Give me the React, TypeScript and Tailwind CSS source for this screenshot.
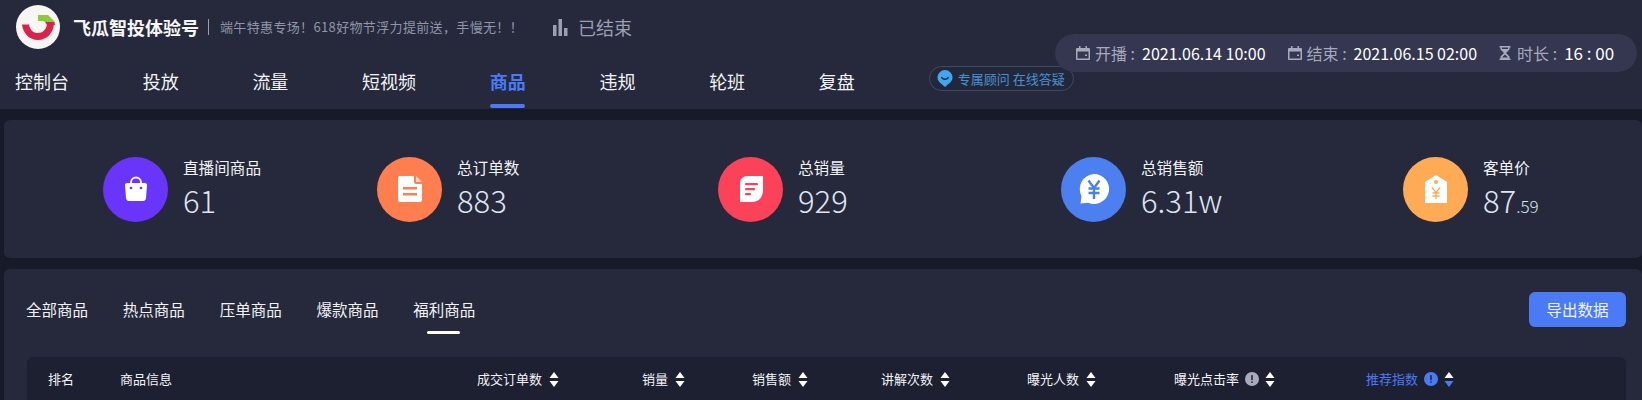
import { ReactNode } from "react";

const navItems = ["控制台", "投放", "流量", "短视频", "商品", "违规", "轮班", "复盘"];
const tabs = ["全部商品", "热点商品", "压单商品", "爆款商品", "福利商品"];

function Logo() {
  return (
    <svg viewBox="0 0 44 44" className="h-11 w-11 shrink-0">
      <circle cx="22" cy="22" r="22" fill="#f7f6f3" />
      <path d="M6 19.500h7c1 6 4.500 8.500 9 8.500s8-3 9-8.500h7c-1 9-7.500 15.500-16 15.500S7 28.500 6 19.500Z" fill="#d9234a" />
      <path d="M22 10h10l7 7h-10l-2-1h-5Z" fill="#8fc73e" />
      <path d="M29 17h9.500l.5 3h-8Z" fill="#d9234a" />
    </svg>
  );
}

function CalendarIcon() {
  return (
    <svg viewBox="0 0 14 14" className="h-[14px] w-[14px] shrink-0" fill="#a7a9bd">
      <path d="M3 0h1.500v2h5V0H11v2h2a1 1 0 0 1 1 1v10a1 1 0 0 1-1 1H1a1 1 0 0 1-1-1V3a1 1 0 0 1 1-1h2Zm-1.500 5.500v7h11v-7Z" />
      <rect x="9" y="8.500" width="2" height="1.500" />
    </svg>
  );
}

function HourglassIcon() {
  return (
    <svg viewBox="0 0 14 14" className="h-[14px] w-[14px] shrink-0" fill="#a7a9bd">
      <path d="M1.500 0h11v1.500h-1v2L8 7l3.500 3.500v2h1V14h-11v-1.500h1v-2L6 7 2.500 3.500v-2h-1Zm2.500 1.500v1.500h6V1.500ZM7 8.500 4 11.500h6Z" />
    </svg>
  );
}

function SortIcon({ active }: { active?: boolean }) {
  return (
    <svg viewBox="0 0 10 15" className="h-[15px] w-[10px] shrink-0">
      <path d="M5 0l4.500 6h-9Z" fill="#ffffff" />
      <path d="M5 15L.5 9h9Z" fill={active ? "#4a7af5" : "#ffffff"} />
    </svg>
  );
}

function InfoIcon({ color }: { color: string }) {
  return (
    <svg viewBox="0 0 14 14" className="h-[14px] w-[14px] shrink-0">
      <circle cx="7" cy="7" r="7" fill={color} />
      <rect x="6.200" y="3" width="1.600" height="5.200" rx=".6" fill="#23263a" />
      <rect x="6.200" y="9.300" width="1.600" height="1.600" rx=".6" fill="#23263a" />
    </svg>
  );
}

function BagIcon() {
  return (
    <svg viewBox="0 0 24 26" className="h-[26px] w-[24px]">
      <path d="M7 8V6.500a5 5 0 0 1 10 0V8" fill="none" stroke="#fff" strokeWidth="1.800" />
      <path d="M3 7h18c1.500 0 2 1 2 2l-1 13c0 2-1.500 3-3 3H5c-1.500 0-3-1-3-3L1 9c0-1 .5-2 2-2Z" fill="#fff" />
      <circle cx="7" cy="12" r="1.300" fill="#6a35fb" />
      <circle cx="17" cy="12" r="1.300" fill="#6a35fb" />
    </svg>
  );
}

function DocIcon() {
  return (
    <svg viewBox="0 0 24 26" className="h-[26px] w-[24px]">
      <path d="M2 0h14v6a2 2 0 0 0 2 2h6v16a2 2 0 0 1-2 2H2a2 2 0 0 1-2-2V2a2 2 0 0 1 2-2Z" fill="#fff" />
      <path d="M18 0l6 6h-6Z" fill="#ffd9c7" />
      <rect x="5" y="11" width="14" height="2.500" fill="#ff7e4f" />
      <rect x="5" y="17" width="14" height="2.500" fill="#ff7e4f" />
    </svg>
  );
}

function NoteIcon() {
  return (
    <svg viewBox="0 0 24 26" className="h-[26px] w-[24px]">
      <path d="M8 0h16v14c0 7-4 12-11 12H1V8c0-5 3-8 7-8Z" fill="#fff" />
      <rect x="6" y="7" width="13" height="2.200" rx="1" fill="#fb4259" />
      <rect x="6" y="12" width="10" height="2.200" rx="1" fill="#fb4259" />
      <rect x="6" y="17" width="6" height="2.200" rx="1" fill="#fb4259" />
    </svg>
  );
}

function YenBubbleIcon() {
  return (
    <svg viewBox="0 0 30 30" className="h-[30px] w-[30px]">
      <path d="M15 0a15 15 0 1 1-6 28.700L1.500 29.500l1-7.500A15 15 0 0 1 15 0Z" fill="#fff" />
      <path d="M9.500 6.500 15 14l5.500-7.500M15 14v11M9.500 14.500h11M9.500 19h11" fill="none" stroke="#4c7ff0" strokeWidth="2.400" />
    </svg>
  );
}

function TagIcon() {
  return (
    <svg viewBox="0 0 22 28" className="h-[28px] w-[22px]">
      <path d="M11 0l11 7v21H0V7Z" fill="#fff" />
      <circle cx="11" cy="7" r="2" fill="#ffaa55" />
      <path d="M7 12.500l4 5 4-5M11 17.500V24M7.500 18h7M7.500 21h7" fill="none" stroke="#ffaa55" strokeWidth="1.300" />
    </svg>
  );
}

function Stat({
  color,
  icon,
  label,
  value,
  suffix,
}: {
  color: string;
  icon: ReactNode;
  label: string;
  value: string;
  suffix?: string;
}) {
  return (
    <div className="flex items-center gap-[15px]">
      <div className={`flex h-[65px] w-[65px] items-center justify-center rounded-full ${color}`}>{icon}</div>
      <div className="pb-[3px]">
        <p className="text-[15.6px] leading-[22px] text-[#f2f3f7]">{label}</p>
        <p className="mt-[2px] h-[40px] text-[31px] leading-[40px] font-light text-[#dfe4f0]">
          {value}
          {suffix && <span className="text-[17px] leading-none">{suffix}</span>}
        </p>
      </div>
    </div>
  );
}

export default function App() {
  return (
    <div className="relative h-[400px] overflow-hidden bg-[#171a28] font-['Noto_Sans_CJK_SC','Microsoft_YaHei',sans-serif] text-white">
      <header className="h-[109px] bg-[#25293b]">
        <div className="flex h-[54px] items-center pl-4">
          <Logo />
          <span className="ml-[13px] text-[18px] font-bold text-[#f5f6f8]">飞瓜智投体验号</span>
          <span className="ml-[9px] h-[16px] w-px bg-[#9a9fb2]" />
          <span className="ml-[11px] text-[13px] tracking-[0.35px] text-[#9095a8]">端午特惠专场！618好物节浮力提前送，手慢无！！</span>
          <svg viewBox="0 0 15 17" className="ml-[30px] h-[17px] w-[15px]" fill="#9a9fb2">
            <rect x="0" y="6" width="3.500" height="11" />
            <rect x="5.500" y="0" width="3.500" height="17" />
            <rect x="11" y="9" width="3.500" height="8" />
          </svg>
          <span className="ml-[10px] text-[18px] text-[#9a9fb2]">已结束</span>
        </div>
        <nav className="flex h-[55px] items-center pl-[15px]">
          <div className="flex gap-[73.700px]">
            {navItems.map((item) =>
              item === "商品" ? (
                <span key={item} className="relative text-[18px] leading-[55px] font-bold text-[#4a7af5]">
                  {item}
                  <span className="absolute right-[1px] bottom-[1px] left-0 h-1 rounded-sm bg-[#4a7af5]" />
                </span>
              ) : (
                <span key={item} className="text-[18px] leading-[55px] text-[#f2f3f7]">
                  {item}
                </span>
              ),
            )}
          </div>
          <div className="mb-[6px] ml-[74px] flex h-[25px] w-[145px] items-center gap-[5px] rounded-full border border-[#3c4a63] bg-[#22283a] pl-[7px]">
            <svg viewBox="0 0 16 17" className="h-[17px] w-[16px]">
              <path d="M8 0a7.500 7.500 0 0 1 7.500 7.500c0 4-3.500 6-7.500 9.500-4-3.500-7.500-5.500-7.500-9.500A7.500 7.500 0 0 1 8 0Z" fill="#42a5ee" />
              <path d="M4.500 7c1 3 6 3 7 0" fill="none" stroke="#173457" strokeWidth="1.300" />
            </svg>
            <span className="text-[13px] whitespace-nowrap text-[#4a90d0]">专属顾问 在线答疑</span>
          </div>
        </nav>
      </header>

      <div className="absolute top-[34px] left-[1055px] flex h-[38px] w-[582px] items-center rounded-full bg-[#34374f] pl-[21px] text-[16px] text-[#a7a9bd]">
        <CalendarIcon />
        <span className="ml-[5px]">开播 :</span>
        <span className="ml-[7px] text-white">2021.06.14 10:00</span>
        <span className="ml-[22px]">
          <CalendarIcon />
        </span>
        <span className="ml-[5px]">结束 :</span>
        <span className="ml-[7px] text-white">2021.06.15 02:00</span>
        <span className="ml-[21px]">
          <HourglassIcon />
        </span>
        <span className="ml-[5px]">时长 :</span>
        <span className="ml-[7px] text-[17px] text-white">16 : 00</span>
      </div>

      <section className="mt-[11px] ml-1 grid h-[138px] grid-cols-[274px_341px_343px_342px_1fr] items-center rounded-md bg-[#25293b] pl-[99px]">
        <Stat color="bg-[#6a35fb]" icon={<BagIcon />} label="直播间商品" value="61" />
        <Stat color="bg-[#ff7e4f]" icon={<DocIcon />} label="总订单数" value="883" />
        <Stat color="bg-[#fb4259]" icon={<NoteIcon />} label="总销量" value="929" />
        <Stat color="bg-[#4c7ff0]" icon={<YenBubbleIcon />} label="总销售额" value="6.31w" />
        <Stat color="bg-[#ffaa55]" icon={<TagIcon />} label="客单价" value="87" suffix=".59" />
      </section>

      <section className="mt-[11px] ml-1 h-[140px] rounded-t-md bg-[#25293b] pt-[22px] pr-4 pl-[23px]">
        <div className="flex h-[66px] items-start justify-between">
          <div className="-ml-[1px] flex gap-[34.800px] text-[15.500px] leading-[36px] text-[#f2f3f7]">
            {tabs.map((tab) => (
              <span key={tab} className="relative">
                {tab}
                {tab === "福利商品" && (
                  <span className="absolute top-[40px] left-[14px] h-[3px] w-[33px] rounded-full bg-white" />
                )}
              </span>
            ))}
          </div>
          <button className="mt-[1px] h-[35px] w-[97px] rounded-md bg-[#4a7af5] text-[15.600px] text-[#f2f3f7]">导出数据</button>
        </div>
        <div className="grid h-[44px] grid-cols-[72px_357px_165px_110px_129px_146px_147px_192px_1fr] items-center rounded-t-md bg-[#1d2031] pl-[21px] text-[13px] text-[#f2f3f7]">
          <span>排名</span>
          <span>商品信息</span>
          {["成交订单数", "销量", "销售额", "讲解次数", "曝光人数"].map((col) => (
            <span key={col} className="flex items-center gap-[7px]">
              {col}
              <SortIcon />
            </span>
          ))}
          <span className="flex items-center gap-[6px]">
            曝光点击率
            <InfoIcon color="#a9abbb" />
            <SortIcon />
          </span>
          <span className="flex items-center gap-[6px] text-[#4a7af5]">
            推荐指数
            <InfoIcon color="#4a7af5" />
            <SortIcon active />
          </span>
        </div>
      </section>
    </div>
  );
}
